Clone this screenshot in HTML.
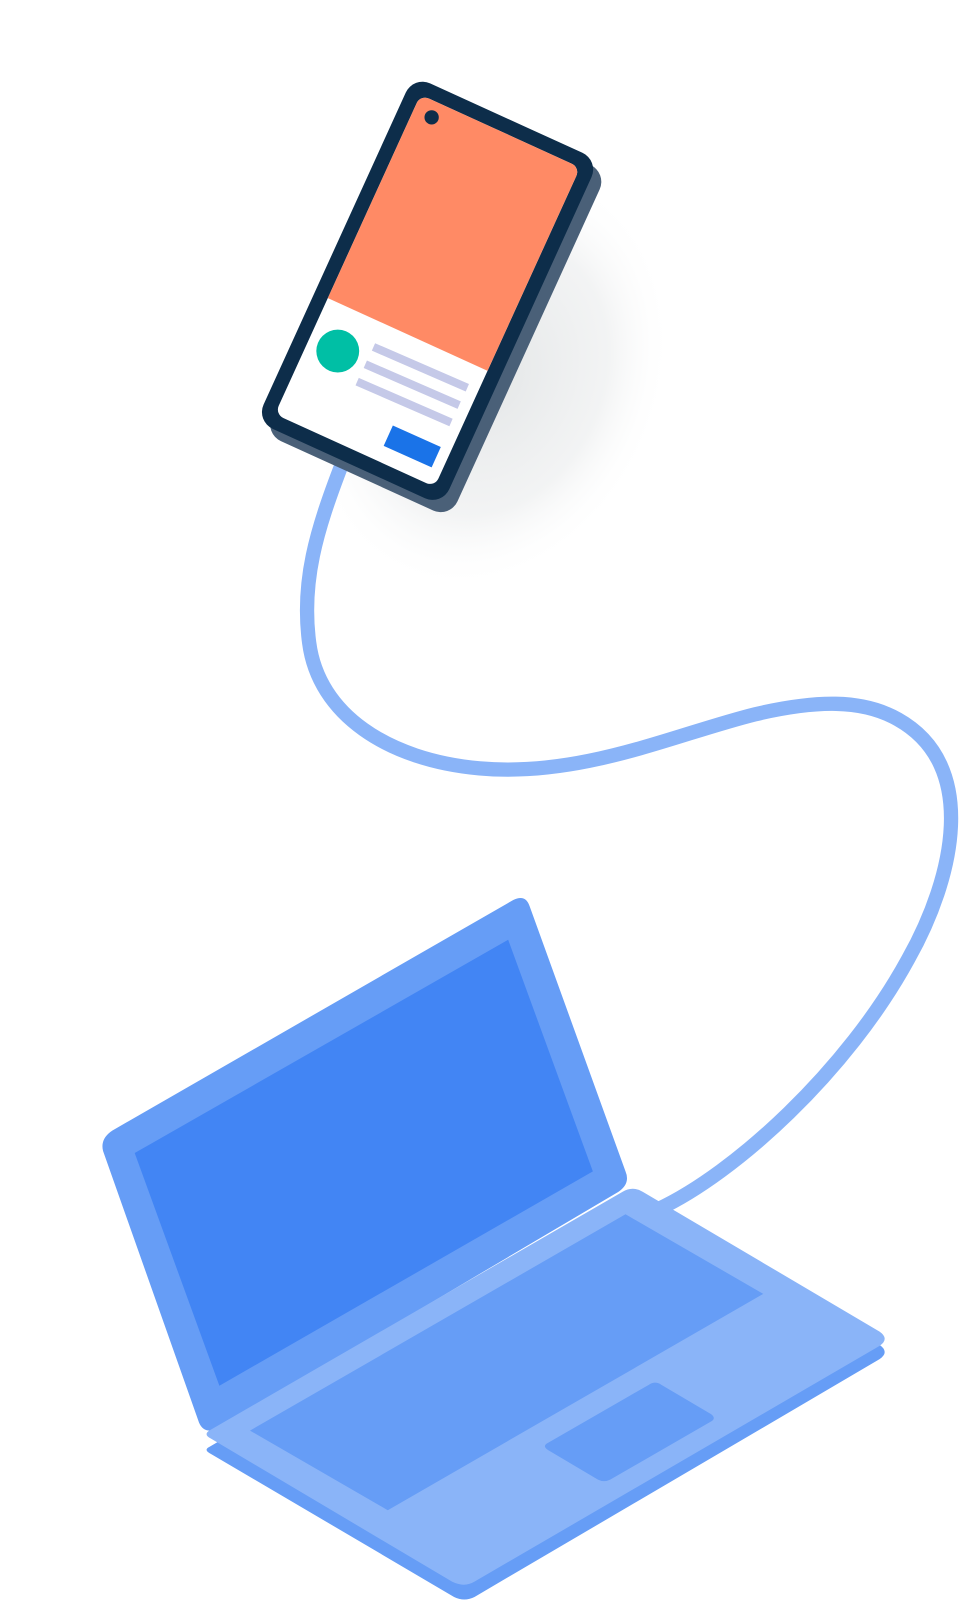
<!DOCTYPE html>
<html><head><meta charset="utf-8"><style>html,body{margin:0;padding:0;background:#fff;}svg{display:block}</style></head>
<body>
<svg width="960" height="1600" viewBox="0 0 940.8 1568" preserveAspectRatio="none" xmlns="http://www.w3.org/2000/svg">
<defs>
<radialGradient id="sh" cx="0.5" cy="0.5" r="0.5">
<stop offset="0" stop-color="#dde0e1" stop-opacity="0.8"/>
<stop offset="0.65" stop-color="#e6e8e9" stop-opacity="0.5"/>
<stop offset="1" stop-color="#ffffff" stop-opacity="0"/>
</radialGradient>
<clipPath id="sc"><rect x="-86" y="-172" width="172" height="344" rx="9"/></clipPath>
</defs>
<ellipse cx="480" cy="370" rx="170" ry="215" transform="rotate(25 480 370)" fill="url(#sh)"/>
<!-- cable -->
<path d="M335,455 C310,520 295,570 303,630 C312,700 380,745 470,753 C570,762 660,720 740,700 C800,686 845,685 880,705 C960,750 935,860 890,940 C830,1050 720,1150 645,1185" fill="none" stroke="#8ab4f8" stroke-width="14" stroke-linecap="round"/>
<!-- phone -->
<g transform="translate(427,297) rotate(24.5)">
<rect x="-100" y="-186" width="200" height="372" rx="18" fill="#4a6078"/>
</g>
<g transform="translate(419,285) rotate(24.5)">
<rect x="-100" y="-186" width="200" height="372" rx="18" fill="#0d2d4a"/>
<g clip-path="url(#sc)">
<rect x="-90" y="-175" width="180" height="350" fill="#fff"/>
<rect x="-90" y="-175" width="180" height="222" fill="#ff8a65"/>
</g>
</g>
<circle cx="423" cy="115" r="7" fill="#0d2d4a"/>
<circle cx="331" cy="344" r="21" fill="#00bfa5"/>
<g stroke="#c5c9e8" stroke-width="8">
<line x1="366" y1="340" x2="458" y2="380"/>
<line x1="358" y1="357" x2="450" y2="397"/>
<line x1="350" y1="374" x2="442" y2="414"/>
</g>
<path d="M385,417 L432,438 L423,458 L376,437Z" fill="#1a73e8"/>
<!-- lid -->
<path d="M503,882 Q515,876 519,888 L613,1148 Q618,1160 606,1168 L214,1400 Q200,1406 195,1394 L101,1128 Q98,1116 110,1108Z" fill="#669df6"/>
<path d="M498,921 L581,1148 L215,1358 L132,1130Z" fill="#4285f4"/>
<!-- laptop base bottom layer -->
<path d="M205,1418 L612,1180 Q620,1176 628,1180 L862,1318 Q872,1325 862,1332 L465,1565 Q455,1570 445,1565 L207,1425 Q199,1421 205,1418Z" fill="#669df6"/>
<!-- base top -->
<path d="M205,1402 L610,1168 Q620,1162 630,1168 L862,1305 Q872,1312 862,1319 L465,1550 Q455,1556 443,1550 L207,1410 Q199,1406 205,1402Z" fill="#8ab4f8"/>
<path d="M245,1402 L613,1190 L748,1268 L380,1480Z" fill="#669df6"/>
<path d="M537,1414 L636,1357 Q642,1353 648,1357 L697,1386 Q702,1390 697,1393 L598,1450 Q592,1453 586,1450 L537,1421 Q531,1417 537,1414Z" fill="#669df6"/>
</svg>
</body></html>
